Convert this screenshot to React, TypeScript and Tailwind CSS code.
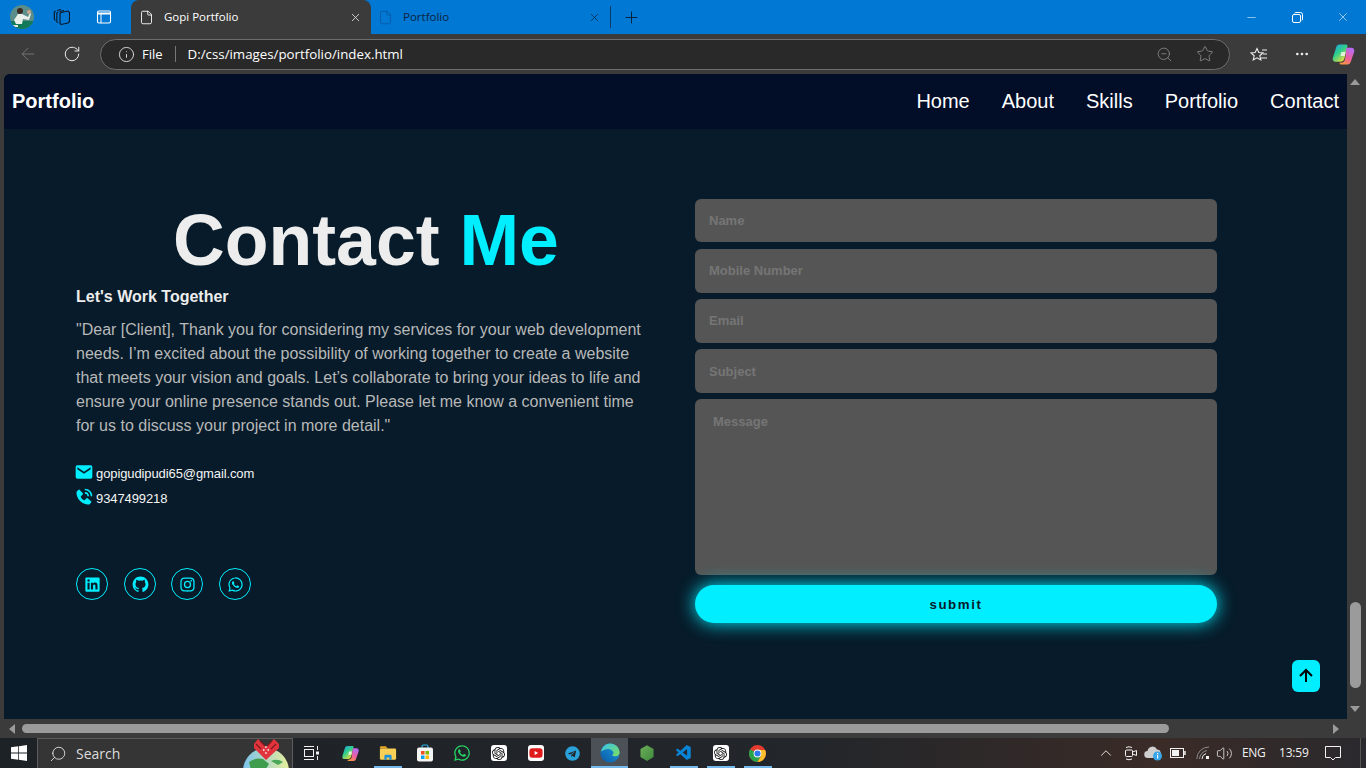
import React from "react";
import { BiLogoLinkedinSquare, BiLogoGithub, BiLogoInstagram, BiLogoWhatsapp, BiSolidEnvelope, BiSolidPhoneCall, BiUpArrowAlt } from "react-icons/bi";
import { FaWhatsapp, FaYoutube, FaTelegram } from "react-icons/fa";
import { SiOpenai } from "react-icons/si";
import { VscVscode } from "react-icons/vsc";
import { ArrowLeft, RotateCw, Info, ZoomOut, Star, Ellipsis, Minus, X, Plus, Search, ChevronUp, Volume2, File } from "lucide-react";

const Copilot = ({ s = 22, id }: { s?: number; id: string }) => (
  <svg width={s} height={s} viewBox="0 0 24 24">
    <defs>
      <linearGradient id={`${id}a`} x1="0" y1="0" x2="0.7" y2="1"><stop offset="0" stopColor="#1f9cf0" /><stop offset="0.5" stopColor="#2fd08a" /><stop offset="1" stopColor="#f2dc3a" /></linearGradient>
      <linearGradient id={`${id}b`} x1="0.6" y1="0" x2="0.2" y2="1"><stop offset="0" stopColor="#b76bf2" /><stop offset="0.55" stopColor="#ee5f9c" /><stop offset="1" stopColor="#fb9a3c" /></linearGradient>
    </defs>
    <path d="M8 2.500h6.500c1 0 1.500.7 1.300 1.500L13 15.500c-.5 2-1.800 3.500-3.800 3.500H4.500c-2.300 0-3.300-2-2.700-4L5 5c.5-1.500 1.500-2.500 3-2.500z" fill={`url(#${id}a)`} />
    <path d="M14.800 5.500h4.700c2.300 0 3.300 2 2.700 4L19 19c-.5 1.500-1.500 2.500-3 2.500H9.500c-1 0-1.500-.7-1.300-1.500h1.300c2.200 0 3.500-1.500 4-3.500z" fill={`url(#${id}b)`} />
    <path d="M10 9.500h4l-1 4h-4z" fill="#fff" fillOpacity=".75" />
  </svg>
);

const Edge = () => (
  <svg width="20" height="20" viewBox="0 0 24 24">
    <defs>
      <linearGradient id="eda" x1="0" y1="1" x2="1" y2="0"><stop offset="0" stopColor="#0c59a4" /><stop offset="1" stopColor="#1b9de2" /></linearGradient>
      <linearGradient id="edb" x1="0" y1="0" x2="1" y2="1"><stop offset="0" stopColor="#35c1f1" /><stop offset="1" stopColor="#7fe05a" /></linearGradient>
    </defs>
    <circle cx="12" cy="12" r="11.500" fill="url(#eda)" />
    <path d="M1 10.500C2.500 4.500 7 .5 12 .5c6.300 0 11.500 4.700 11.500 11 0 3-2.500 4.500-5 4.500-2 0-3.500-.7-4-1.500 1.500-1 2-2.300 1.500-3.700C14.500 8 11 6.700 7.500 7.500 4.500 8.200 2.200 9.500 1 10.500z" fill="url(#edb)" />
  </svg>
);

const Chrome = () => (
  <svg width="17" height="17" viewBox="0 0 24 24">
    <circle cx="12" cy="12" r="12" fill="#e33b2e" />
    <path d="M12 12 1.600 6A12 12 0 0 0 12 24l5-9z" fill="#2aa24a" />
    <path d="M12 7h10.800A12 12 0 0 1 12 24l5.200-9z" fill="#fbc02d" />
    <circle cx="12" cy="12" r="5.500" fill="#fff" />
    <circle cx="12" cy="12" r="4.300" fill="#2f79ea" />
  </svg>
);

const Explorer = () => (
  <svg width="18" height="18" viewBox="0 0 20 20">
    <path d="M1 4c0-1 .6-1.500 1.500-1.500h5L10 5H1z" fill="#e5a823" />
    <rect x="1" y="5" width="18" height="12.500" rx="1.500" fill="#f9cf56" />
    <path d="M6 17.500v-4a1.500 1.500 0 0 1 1.500-1.500h5a1.500 1.500 0 0 1 1.500 1.500v4h-2.500v-2.500h-3v2.500z" fill="#1f8fd8" />
  </svg>
);

const Store = () => (
  <svg width="16" height="18" viewBox="0 0 16 18">
    <path d="M5 4V2.500C5 1.500 5.800 1 6.500 1h3c.8 0 1.500.5 1.500 1.500V4" fill="none" stroke="#27b3e8" strokeWidth="1.200" />
    <rect x="0" y="3.500" width="16" height="14" rx="2" fill="#f4f4f4" />
    <rect x="4" y="7" width="3.500" height="3.500" fill="#f25022" />
    <rect x="8.500" y="7" width="3.500" height="3.500" fill="#7fba00" />
    <rect x="4" y="11.500" width="3.500" height="3.500" fill="#00a4ef" />
    <rect x="8.500" y="11.500" width="3.500" height="3.500" fill="#ffb900" />
  </svg>
);

const Windows = () => (
  <svg width="16" height="16" viewBox="0 0 17 17" fill="#fff">
    <path d="M0 2.500 7.700 1.400v6.600H0zM8.500 1.300 17 0v8H8.500zM0 8.900h7.700v6.700L0 14.500zM8.500 8.900H17V17l-8.500-1.300z" />
  </svg>
);

const Gift = () => (
  <svg width="50" height="30" viewBox="0 0 50 30">
    <defs><linearGradient id="gl" x1="0" y1="0" x2="1" y2="0"><stop offset="0" stopColor="#7cc4ee" /><stop offset="1" stopColor="#e7ee9a" /></linearGradient></defs>
    <circle cx="25" cy="33" r="23" fill="url(#gl)" />
    <path d="M8 24q7-5 14-3l6 5-4 6H10z" fill="#3e9e4e" />
    <path d="M30 23q6-3 12 1l-5 3z" fill="#4aa758" />
    <path d="M25 22 13 10V6l4-5 8 8 8-8 5 5v4z" fill="#e2343c" />
    <path d="M15 6l5 5M19 3l5 5M35 6l-5 5M31 3l-5 5" stroke="#7d1a20" strokeWidth="1.300" />
    <path d="M22 12h1.500M26.500 12h1.500M24.200 15h1.500M24.200 9h1.500" stroke="#fff" strokeWidth="1.300" />
  </svg>
);

const Node = () => (
  <svg width="14" height="16" viewBox="0 0 16 18">
    <defs><linearGradient id="nd" x1="0" y1="0" x2="1" y2="1"><stop offset="0" stopColor="#6fae5a" /><stop offset="1" stopColor="#3d8a3d" /></linearGradient></defs>
    <path d="M8 0l7.500 4.500v9L8 18 .5 13.500v-9z" fill="url(#nd)" />
  </svg>
);

const Avatar = () => (
  <svg width="24" height="24" viewBox="0 0 24 24">
    <defs><clipPath id="av"><circle cx="12" cy="12" r="12" /></clipPath></defs>
    <g clipPath="url(#av)">
      <rect width="24" height="24" fill="#5b8d8a" />
      <rect y="16" width="24" height="8" fill="#127a58" />
      <circle cx="10" cy="6" r="3" fill="#3a2a22" />
      <path d="M4 15l4-6h4l6 3 2-4 1 1-2 6-6-1-1 5H6z" fill="#e9efe9" />
      <circle cx="19" cy="7" r="2" fill="#c9a68d" />
      <path d="M2 20h6v2H2z" fill="#dfe8df" />
    </g>
  </svg>
);

const Collections = () => (
  <svg width="18" height="18" viewBox="0 0 18 18" fill="none" stroke="#08182a" strokeWidth="1.100">
    <path d="M8 4.500 15 3l1.500 1.500v9L15 15l-7 1.500-1-1V5.500z" />
    <path d="M6.500 3.500 11 2.500M5 15 3.800 13.500V5L5 4" />
    <path d="M4 2.500 8 1.500M2.500 12.500 1.300 11V4L2.500 3" />
  </svg>
);

const Meet = () => (
  <svg width="14" height="16" viewBox="0 0 14 16" fill="none" stroke="#f2f2f2" strokeWidth="1">
    <rect x="1.500" y="5" width="7" height="6.500" rx="1" />
    <path d="M8.500 7l4-1.500v5l-4-1.500M2 2.500q3-1.500 6 0M2 14q3 1.500 6 0" />
  </svg>
);

const Cloud = () => (
  <svg width="20" height="18" viewBox="0 0 20 18">
    <path d="M4 14a3.500 3.500 0 0 1-.5-7A5 5 0 0 1 13 5.500 3.500 3.500 0 0 1 15 12v2z" fill="#cfcfcf" />
    <circle cx="13.500" cy="12" r="4.500" fill="#38a6e8" />
    <rect x="13" y="11" width="1.200" height="3.500" fill="#fff" />
    <rect x="13" y="9" width="1.200" height="1.200" fill="#fff" />
  </svg>
);

const Battery = () => (
  <svg width="16" height="10" viewBox="0 0 16 10">
    <rect x=".5" y=".5" width="13" height="9" fill="none" stroke="#f2f2f2" />
    <rect x="2" y="2" width="7" height="6" fill="#f2f2f2" />
    <rect x="14.200" y="3" width="1.500" height="4" fill="#f2f2f2" />
  </svg>
);

const Wifi = () => (
  <svg width="14" height="14" viewBox="0 0 14 14" fill="none">
    <path d="M.8 13A12 12 0 0 1 13 1M3.500 13A9 9 0 0 1 11 4.500" stroke="#8c8c8c" />
    <path d="M6 13A6 6 0 0 1 10 7.500" stroke="#e8e8e8" />
    <rect x="10" y="10" width="3" height="3" fill="#f2f2f2" />
  </svg>
);

const Notice = () => (
  <svg width="16" height="15" viewBox="0 0 16 15" fill="none" stroke="#f2f2f2">
    <path d="M.5.500h15v11h-5L8 14l-2.500-2.500h-5z" />
  </svg>
);

const TabIcon = () => (
  <svg width="16" height="16" viewBox="0 0 16 16" fill="none" stroke="#fff" strokeWidth="1.100">
    <rect x="1.500" y="2" width="13" height="12" rx="1.500" />
    <path d="M1.500 4.500h13" strokeWidth="2" />
    <path d="M5 5v9" strokeWidth="1" />
  </svg>
);

const RestoreIcon = () => (
  <svg width="11" height="11" viewBox="0 0 11 11" fill="none" stroke="#fff">
    <rect x=".5" y="2.500" width="8" height="8" rx="1.500" />
    <path d="M2.500 1.200Q3 .5 4 .5h4.500A2 2 0 0 1 10.500 2.500V7Q10.500 8 9.800 8.500" />
  </svg>
);

const FavStar = () => (
  <svg width="18" height="18" viewBox="0 0 18 18" fill="none" stroke="#ededed" strokeWidth="1.100">
    <path d="M7 1.500l1.800 4 4.200.4-3.200 2.900 1 4.200L7 10.800 3.200 13l1-4.200L1 5.900l4.200-.4z" transform="translate(0 2)" />
    <path d="M12 5h5M13 9h4M11 13h6" />
  </svg>
);

const Tri = ({ d }: { d: "up" | "down" | "left" | "right" }) => {
  const p = { up: "M0 7 5 1 10 7z", down: "M0 1 5 7 10 1z", left: "M7 0 1 5 7 10z", right: "M1 0 7 5 1 10z" }[d];
  const hz = d === "left" || d === "right";
  return (
    <svg width={hz ? 8 : 10} height={hz ? 10 : 8} viewBox={hz ? "0 0 8 10" : "0 0 10 8"}>
      <path d={p} fill="#9a9a9a" />
    </svg>
  );
};

const field =
  "block w-full bg-[#555555] rounded-[6px] outline-none font-bold text-[13px] text-white placeholder:text-[#757575] font-['Liberation_Sans',Arial,sans-serif]";

const Slot = ({ active, on, children }: { active?: boolean; on?: boolean; children: React.ReactNode }) => (
  <div className={`relative w-[37px] h-full flex items-center justify-center ${active ? "bg-[#4c5157]" : ""}`}>
    {children}
    {on && <div className="absolute bottom-0 left-[5px] right-[4px] h-[2px] bg-[#76b9ed]" />}
    {active && <div className="absolute bottom-0 left-0 right-0 h-[2px] bg-[#76b9ed]" />}
  </div>
);

const Gpt = () => (
  <div className="w-4 h-4 rounded-[3px] bg-white flex items-center justify-center">
    <SiOpenai size={13} color="#111" />
  </div>
);

export default function App() {
  const social = [BiLogoLinkedinSquare, BiLogoGithub, BiLogoInstagram, BiLogoWhatsapp];
  const gaps = ["mr-4", "mr-[15px]", "mr-4", ""];
  return (
    <div className="w-[1366px] h-[768px] overflow-hidden flex flex-col bg-[#3b3b3b] font-['Liberation_Sans',Arial,sans-serif]">
      {/* tab strip */}
      <div className="h-[34px] shrink-0 bg-[#0078d4] flex items-end text-white font-['Open_Sans',sans-serif]">
        <div className="w-[131px] h-full flex items-center pl-[10px]">
          <Avatar />
          <div className="ml-[19px]"><Collections /></div>
          <div className="ml-[25px]"><TabIcon /></div>
        </div>
        <div className="w-[240px] h-[34px] bg-[#3b3b3b] rounded-t-[8px] flex items-center pl-[8px] pr-[9px]">
          <File size={15} strokeWidth={1.4} color="#fff" />
          <span className="ml-[10px] text-[11.500px]">Gopi Portfolio</span>
          <X size={13} strokeWidth={1.5} className="ml-auto" color="#e8e8e8" />
        </div>
        <div className="w-[239px] h-full flex items-center pl-[7px] pr-[9px] text-[#0b2340]">
          <File size={15} strokeWidth={1} color="#0a4f94" />
          <span className="ml-[10px] text-[11.500px]">Portfolio</span>
          <X size={13} strokeWidth={1.3} className="ml-auto" color="#0b2340" />
        </div>
        <div className="w-px h-[22px] bg-[#0b3a66] mb-[6px]" />
        <div className="w-[40px] h-full flex items-center justify-center"><Plus size={19} strokeWidth={1.1} color="#08182a" /></div>
        <div className="ml-auto h-full flex items-center">
          <div className="w-[46px] flex justify-center"><Minus size={13} strokeWidth={1} /></div>
          <div className="w-[46px] flex justify-center"><RestoreIcon /></div>
          <div className="w-[46px] flex justify-center"><X size={14} strokeWidth={1} /></div>
        </div>
      </div>

      {/* toolbar */}
      <div className="h-[40px] shrink-0 bg-[#3b3b3b] flex items-center text-white font-['Open_Sans',sans-serif]">
        <div className="w-[100px] flex items-center pl-[18px]">
          <ArrowLeft size={20} strokeWidth={1} color="#7d7d7d" />
          <RotateCw size={18} strokeWidth={1.3} color="#ededed" className="ml-[25px]" />
        </div>
        <div className="w-[1130px] h-[31px] rounded-full bg-[#292929] border border-[#6e6e6e] flex items-center pl-[17px] pr-[15px]">
          <Info size={17} strokeWidth={1.2} color="#ededed" />
          <span className="ml-[7px] text-[13px] pt-[1px]">File</span>
          <div className="w-px h-[16px] bg-[#777] ml-[12px]" />
          <span className="ml-[12px] text-[13.300px] pt-[1px]">D:/css/images/portfolio/index.html</span>
          <ZoomOut size={17} strokeWidth={1} color="#9a9a9a" className="ml-auto" />
          <Star size={18} strokeWidth={1} color="#9a9a9a" className="ml-[23px]" />
        </div>
        <div className="flex-1 flex items-center pl-[20px]">
          <FavStar />
          <Ellipsis size={16} color="#ededed" className="ml-[26px]" />
          <div className="ml-[21px]"><Copilot s={25} id="cp1" /></div>
        </div>
      </div>

      {/* viewport */}
      <div className="h-[664px] shrink-0 flex flex-col">
        <div className="h-[645px] flex pl-[4px]">
          <div className="relative w-[1343px] h-full rounded-tl-[6px] overflow-hidden bg-[#071b2a] text-white">
            <header className="h-[55px] bg-[#020d28] flex items-center justify-between px-[8px] pb-[2px]">
              <div className="text-[20px] leading-[24px] font-bold">Portfolio</div>
              <nav className="flex gap-[32px] text-[20px] leading-[24px]">
                <span>Home</span><span>About</span><span>Skills</span><span>Portfolio</span><span>Contact</span>
              </nav>
            </header>
            <main className="flex pt-[71px] pl-[72px]">
              <div className="w-[580px] mr-[39px]">
                <h1 className="text-[71.600px] font-bold leading-[80px] text-center text-[#ededed]">
                  Contact <span className="text-[#00eeff]">Me</span>
                </h1>
                <h3 className="mt-[5px] text-[16px] leading-[24px] font-bold text-[#ededed]">Let's Work Together</h3>
                <p className="mt-[9px] w-[575px] text-[16px] leading-[24px] text-[#b8b8b8]">
                  "Dear [Client], Thank you for considering my services for your web development needs. I’m excited about the possibility of working together to create a website that meets your vision and goals. Let’s collaborate to bring your ideas to life and ensure your online presence stands out. Please let me know a convenient time for us to discuss your project in more detail."
                </p>
                <div className="mt-[23px] flex items-center h-[25px] text-[13px] tracking-[-0.1px] text-[#f5f5f5]">
                  <BiSolidEnvelope size={20} color="#00eeff" className="-ml-[2px] mr-[2px] -mt-[4px]" />
                  gopigudipudi65@gmail.com
                </div>
                <div className="flex items-center h-[25px] text-[13px] tracking-[-0.1px] text-[#f5f5f5]">
                  <BiSolidPhoneCall size={20} color="#00eeff" className="-ml-[2px] mr-[2px] -mt-[3px]" />
                  9347499218
                </div>
                <div className="mt-[57px] flex">
                  {social.map((I, i) => (
                    <div key={i} className={`w-8 h-8 rounded-full border border-[#00eeff] flex items-center justify-center ${gaps[i]}`}>
                      <I size={19} color="#00eeff" />
                    </div>
                  ))}
                </div>
              </div>
              <form className="w-[522px] -mt-[1px] flex flex-col">
                <input className={`${field} h-[43px] px-[14px]`} placeholder="Name" />
                <input className={`${field} h-[44px] px-[14px] mt-[7px] pb-[2px]`} placeholder="Mobile Number" />
                <input className={`${field} h-[44px] px-[14px] mt-[6px] pb-[2px]`} placeholder="Email" />
                <input className={`${field} h-[44px] px-[14px] mt-[6px]`} placeholder="Subject" />
                <textarea className={`${field} h-[176px] px-[18px] pt-[13px] pb-[14px] mt-[6px] resize-none`} placeholder="Message" />
                <button type="button" className="mt-[10px] h-[38px] pt-[1px] rounded-full bg-[#00eeff] text-[13.300px] font-bold tracking-[1.600px] text-[#081b29] shadow-[0_0_18px_#00eeff]">
                  submit
                </button>
              </form>
            </main>
            <div className="absolute left-[1288px] top-[586px] w-[28px] h-[32px] rounded-[6px] bg-[#00eeff] flex items-center justify-center">
              <BiUpArrowAlt size={24} color="#000" />
            </div>
          </div>
          <div className="w-[19px] h-full flex flex-col items-center pr-[3px]">
            <div className="h-[16px] flex items-center"><Tri d="up" /></div>
            <div className="mt-[512px] w-[11px] h-[86px] rounded-full bg-[#9b9b9b]" />
            <div className="mt-[17px] h-[8px] flex items-center"><Tri d="down" /></div>
          </div>
        </div>
        <div className="h-[19px] flex items-center pl-[8px] pr-[26px]">
          <Tri d="left" />
          <div className="ml-[6px] w-[1147px] h-[9px] rounded-full bg-[#9b9b9b]" />
          <div className="ml-auto"><Tri d="right" /></div>
        </div>
      </div>

      {/* taskbar */}
      <div className="h-[30px] shrink-0 flex items-center text-white font-['Open_Sans',sans-serif] bg-[linear-gradient(90deg,#1d2226_0%,#23262a_60%,#3a2b27_85%,#2a292d_100%)] overflow-hidden">
        <div className="w-[37px] flex justify-center"><Windows /></div>
        <div className="relative w-[256px] h-full bg-[#353535] border-t border-x border-[#5c5c5c] flex items-center pl-[11px]">
          <Search size={18} strokeWidth={1.1} color="#f0f0f0" className="-scale-x-100" />
          <span className="ml-[9px] text-[14px] text-[#dcdcdc]">Search</span>
          <div className="absolute left-[203px] top-[-1px]"><Gift /></div>
        </div>
        <div className="h-full flex -ml-[1px]">
          <div className="mr-[3px]"><Slot><svg width="16" height="16" viewBox="0 0 16 16" fill="none" stroke="#f2f2f2"><rect x="1.500" y="4.500" width="9" height="7" /><path d="M1 1.500h10M1 14.500h10M14.500 1v4M14.500 11v4" /><rect x="13" y="6.500" width="3" height="3" fill="#f2f2f2" stroke="none" /></svg></Slot></div>
          <Slot><Copilot s={19} id="cp2" /></Slot>
          <Slot on><Explorer /></Slot>
          <Slot><Store /></Slot>
          <Slot><FaWhatsapp size={18} color="#25d366" /></Slot>
          <Slot><Gpt /></Slot>
          <Slot><div className="w-4 h-4 rounded-[3px] bg-white flex items-center justify-center"><FaYoutube size={14} color="#e01b1b" /></div></Slot>
          <Slot><FaTelegram size={15} color="#2aa1da" /></Slot>
          <Slot active><Edge /></Slot>
          <Slot><Node /></Slot>
          <Slot on><VscVscode size={18} color="#0a84d6" /></Slot>
          <Slot on><Gpt /></Slot>
          <Slot on><Chrome /></Slot>
        </div>
        <div className="ml-auto h-full flex items-center text-[#f0f0f0] text-[12px] pr-[5px]">
          <ChevronUp size={18} strokeWidth={1.2} />
          <div className="ml-[9px]"><Meet /></div>
          <div className="ml-[6px]"><Cloud /></div>
          <div className="ml-[6px]"><Battery /></div>
          <div className="ml-[10px]"><Wifi /></div>
          <Volume2 size={17} strokeWidth={1.1} className="ml-[6px]" />
          <span className="ml-[9px] w-[24px] tracking-[-0.3px]">ENG</span>
          <span className="ml-[13px] w-[27px] tracking-[-0.2px]">13:59</span>
          <div className="ml-[19px]"><Notice /></div>
          <div className="ml-[19px] w-px h-full bg-[#555]" />
        </div>
      </div>
    </div>
  );
}
